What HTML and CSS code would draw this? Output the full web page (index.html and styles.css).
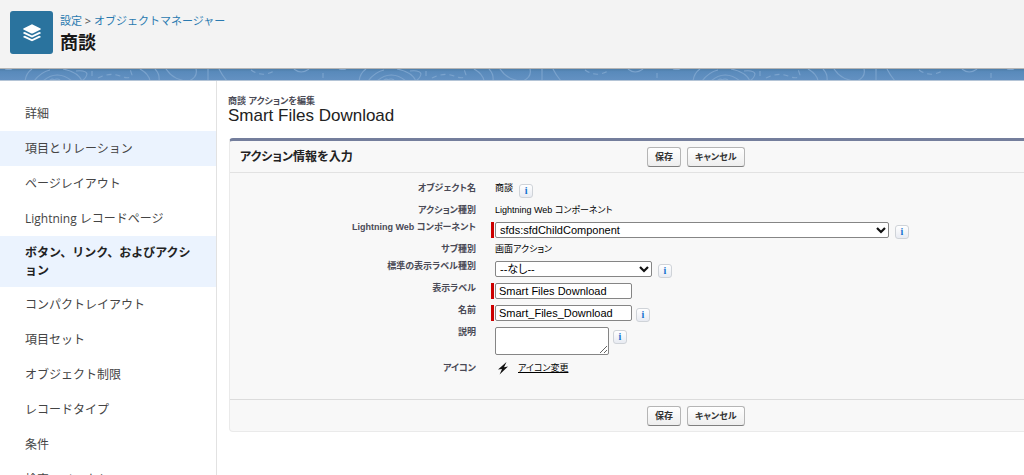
FILE: index.html
```html
<!DOCTYPE html>
<html lang="ja">
<head>
<meta charset="utf-8">
<title>商談 - アクションを編集</title>
<link rel="stylesheet" href="styles.css">
</head>
<body>
<svg class="defs" aria-hidden="true">
  <symbol id="caret" viewBox="0 0 10 8"><path d="M1 2l4 4 4-4" fill="none" stroke="#111" stroke-width="2.2"/></symbol>
</svg>
<header class="page-header">
  <span class="app-icon">
    <svg viewBox="0 0 20 20" width="20" height="20" aria-hidden="true" fill="#fff">
      <path d="M10 1.2 18.6 5.6Q19 6 18.6 6.4L10.6 10.4Q10 10.6 9.4 10.4L1.4 6.4Q1 6 1.4 5.6Z"/>
      <path d="M1.3 9.6 2.8 8.9 10 12.5 17.2 8.9 18.7 9.6Q19 10 18.6 10.4L10.6 14.3Q10 14.6 9.4 14.3L1.4 10.4Q1 10 1.3 9.6Z"/>
      <path d="M1.3 13.4 2.8 12.7 10 16.3 17.2 12.7 18.7 13.4Q19 13.8 18.6 14.2L10.6 18.1Q10 18.4 9.4 18.1L1.4 14.2Q1 13.8 1.3 13.4Z"/>
    </svg>
  </span>
  <div>
    <nav class="breadcrumb" aria-label="パンくず"><a href="#">設定</a> &gt; <a href="#">オブジェクトマネージャー</a></nav>
    <h1>商談</h1>
  </div>
</header>
<svg class="band" aria-hidden="true">
  <defs>
    <linearGradient id="bandfill" x1="0" y1="0" x2="0" y2="1"><stop offset="0" stop-color="#4e7ea9"/><stop offset=".25" stop-color="#598abb"/><stop offset="1" stop-color="#6391c2"/></linearGradient>
    <pattern id="lines" width="334" height="12" patternUnits="userSpaceOnUse">
      <g fill="none" stroke="#7ba3cd" stroke-width="1.1">
        <path d="M25 12Q26 4 32 0M34 12Q41 3 50 1M63 0Q78 3 82 12M43 12Q57 0 72 12M49 12q3-3 5-1q3-2 6 0"/>
        <path d="M76 2Q86 1 87 5Q86 10 81 12M140 0Q149 5 150 12M155 0Q160 5 159 12M166 0Q174 12 189 12Q198 8 196 0M208 0V12M219 0Q222 6 227 12"/>
        <path d="M98 9Q110 3 120 7T132 6L130 0M92 2V10M251 1Q262 9 274 2M323 4V9" stroke-dasharray="5 4"/>
        <path d="M294 0Q301 6 309 0M5 0Q9 1 12 0"/>
      </g>
    </pattern>
  </defs>
  <rect width="100%" height="100%" fill="url(#bandfill)"/>
  <rect width="100%" height="100%" fill="url(#lines)"/>
</svg>
<div class="layout">
  <nav class="sidebar" aria-label="オブジェクト設定">
    <a href="#">詳細</a>
    <a href="#" class="shaded">項目とリレーション</a>
    <a href="#">ページレイアウト</a>
    <a href="#">Lightning レコードページ</a>
    <a href="#" class="active" aria-current="page">ボタン、リンク、およびアクション</a>
    <a href="#">コンパクトレイアウト</a>
    <a href="#">項目セット</a>
    <a href="#">オブジェクト制限</a>
    <a href="#">レコードタイプ</a>
    <a href="#">条件</a>
    <a href="#">検索レイアウト</a>
  </nav>
  <main class="content">
    <p class="kicker">商談 アクションを編集</p>
    <h2 class="title">Smart Files Download</h2>
    <form class="panel">
      <div class="bar bar-top">
        <h3>アクション情報を入力</h3>
        <div class="buttons"><button type="button">保存</button><button type="button">キャンセル</button></div>
      </div>
      <div class="fields">
        <div class="row"><span class="label">オブジェクト名</span><div class="value with-info"><span>商談</span><button type="button" class="info" aria-label="ヘルプ">i</button></div></div>
        <div class="row"><span class="label">アクション種別</span><div class="value text-value">Lightning Web コンポーネント</div></div>
        <div class="row"><label class="label" for="lwc">Lightning Web コンポーネント</label>
          <div class="value control required"><span class="select wide"><select id="lwc"><option>sfds:sfdChildComponent</option></select><svg class="caret" aria-hidden="true"><use href="#caret"/></svg></span><button type="button" class="info" aria-label="ヘルプ">i</button></div></div>
        <div class="row"><span class="label">サブ種別</span><div class="value text-value">画面アクション</div></div>
        <div class="row"><label class="label" for="std">標準の表示ラベル種別</label>
          <div class="value control"><span class="select"><select id="std"><option>--なし--</option></select><svg class="caret" aria-hidden="true"><use href="#caret"/></svg></span><button type="button" class="info" aria-label="ヘルプ">i</button></div></div>
        <div class="row"><label class="label" for="lbl">表示ラベル</label>
          <div class="value control required"><input id="lbl" type="text" value="Smart Files Download"></div></div>
        <div class="row"><label class="label" for="name">名前</label>
          <div class="value control required tight"><input id="name" type="text" value="Smart_Files_Download"><button type="button" class="info" aria-label="ヘルプ">i</button></div></div>
        <div class="row"><label class="label" for="desc">説明</label>
          <div class="value control tight tall"><textarea id="desc"></textarea><button type="button" class="info" aria-label="ヘルプ">i</button></div></div>
        <div class="row"><span class="label">アイコン</span>
          <div class="value icon-value"><svg width="12" height="14" viewBox="0 0 12 14" aria-hidden="true"><path d="M9.5 1 1 8.6 5 8 2.6 13.5 11 5.6 7 6.2Z" fill="#111"/></svg><a href="#">アイコン変更</a></div></div>
      </div>
      <div class="bar bar-bottom">
        <div class="buttons"><button type="button">保存</button><button type="button">キャンセル</button></div>
      </div>
    </form>
  </main>
</div>
</body>
</html>
```
FILE: styles.css
```css
* { box-sizing: border-box; }
html { height: 100%; overflow: hidden; }
body {
  margin: 0;
  height: 100%;
  display: flex;
  flex-direction: column;
  overflow: hidden;
  background: #fff;
  color: #222;
  font-family: "Liberation Sans", "Noto Sans CJK JP", sans-serif;
  font-size: 9px;
}
h1, h2, h3, p { margin: 0; }
.defs { position: absolute; width: 0; height: 0; }

.page-header {
  flex: none;
  display: flex;
  gap: 7px;
  padding: 11px 10px 14px;
  background: #f3f3f3;
  border-bottom: 1px solid #b5b5b5;
  font-family: "Noto Sans", "Noto Sans CJK JP", sans-serif;
}
.app-icon {
  display: flex;
  align-items: center;
  justify-content: center;
  width: 43px;
  height: 43px;
  border-radius: 3px;
  background: #2a739e;
}
.breadcrumb { font-size: 11px; line-height: 19px; color: #555; }
.breadcrumb a { color: #2a7ab0; text-decoration: none; }
h1 { font-size: 18px; line-height: 24px; color: #181818; }

.band { flex: none; display: block; width: 100%; height: 12px; border-bottom: 1px solid #b4c4d6; }

.layout { flex: 1; min-height: 0; display: grid; grid-template-columns: 217px 1fr; }
.sidebar {
  padding-top: 15px;
  overflow: hidden;
  border-right: 1px solid #e2e2e2;
  font-family: "Open Sans", "Noto Sans CJK JP", sans-serif;
}
.sidebar a {
  display: block;
  padding: 9px 20px 8px 25px;
  font-size: 12px;
  line-height: 18px;
  color: #444;
  text-decoration: none;
}
.sidebar .shaded, .sidebar .active { background: #ebf3fe; }
.sidebar .active { padding: 8px 20px 7px 25px; font-weight: 700; color: #222; }

.content { padding: 14px 0 0 11px; overflow: hidden; font-feature-settings: "palt"; }
.kicker { font-size: 9px; line-height: 12px; font-weight: 700; color: #4a4a56; }
.title { font-size: 17px; line-height: 18px; font-weight: 400; color: #222; }

.panel {
  margin: 13px 0 0 1px;
  background: #f8f8f8;
  border: 1px solid #eaeaea;
  border-top: 3px solid #747e9c;
  border-right: 0;
  border-radius: 4px 0 0 4px;
}
.bar { display: grid; grid-template-columns: 407px 1fr; align-items: center; height: 32px; padding-left: 10px; }
.bar-top { border-bottom: 1px solid #e2e2e2; }
.bar-bottom { border-top: 1px solid #dcdcdc; }
.bar h3 { font-size: 12px; line-height: 18px; color: #222; }
.buttons { grid-column: 2; display: flex; gap: 6px; }
.buttons button {
  height: 20px;
  padding: 0 7px;
  border: 1px solid #b5b5b5;
  border-bottom-color: #7f7f7f;
  border-radius: 3px;
  background: linear-gradient(#fff, #eee);
  font: 700 9px/16px "Liberation Sans", "Noto Sans CJK JP", sans-serif;
  font-feature-settings: "palt";
  color: #333;
}

.fields { padding: 8px 0 24px; }
.row { display: grid; grid-template-columns: 246px 1fr; column-gap: 19px; align-items: start; }
.label { text-align: right; font-size: 9px; line-height: 14px; font-weight: 700; color: #4a4a56; }
.value { display: flex; align-items: flex-start; gap: 6px; line-height: 14px; color: #000; }
.with-info { gap: 6px; padding-bottom: 5px; }
.text-value { padding-bottom: 3px; }
.control { padding: 2px 0 4px; }
.tight { gap: 4px; }
.tall { padding-bottom: 6px; }
.required { margin-left: -4px; }
.required::before { content: ""; width: 3px; height: 16px; margin-right: -5px; background: #c00; }
.required.tight::before { margin-right: -3px; }

input, select, textarea {
  display: block;
  margin: 0;
  border: 1px solid #858585;
  border-radius: 2px;
  background: #fff;
  color: #000;
  font: 11px/14px "Liberation Sans", "Noto Sans CJK JP", sans-serif;
}
input { width: 137px; height: 16px; padding: 0 3px; }
.select { position: relative; width: 157px; }
.select.wide { width: 394px; }
select { width: 100%; height: 16px; padding: 0 16px 0 4px; appearance: none; font-feature-settings: "palt"; }
.caret { position: absolute; right: 3px; top: 4px; width: 10px; height: 8px; pointer-events: none; }
textarea { width: 114px; height: 28px; resize: both; }

.info {
  width: 14px;
  height: 14px;
  margin-top: 3px;
  padding: 0;
  border: 1px solid #cfd3d8;
  border-radius: 3px;
  background: linear-gradient(#fff, #e8ebf2);
  color: #1472d0;
  font: 700 10px/12px "Liberation Serif", serif;
}
.control .info { margin-bottom: -1px; }
.icon-value { gap: 9px; padding-left: 2px; }
.icon-value a { color: #000; }
```
